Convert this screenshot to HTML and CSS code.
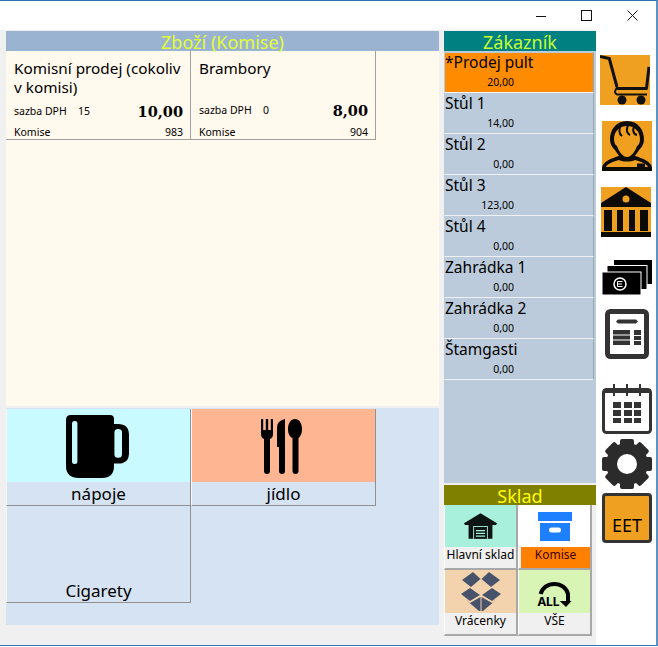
FILE: index.html
```html
<!DOCTYPE html>
<html lang="cs">
<head>
<meta charset="utf-8">
<title>Pokladna</title>
<link rel="stylesheet" href="styles.css">
</head>
<body>
<div class="window">
  <header class="titlebar">
    <svg class="ctl" width="10" height="10" viewBox="0 0 10 10"><path d="M0 5.500H10" stroke="#111" fill="none"/></svg>
    <svg class="ctl" width="11" height="11" viewBox="0 0 11 11"><rect x=".5" y=".5" width="10" height="10" stroke="#111" fill="none"/></svg>
    <svg class="ctl" width="11" height="11" viewBox="0 0 11 11"><path d="M.5 .5L10.500 10.500M10.500 .5L.5 10.500" stroke="#111" fill="none"/></svg>
  </header>
  <div class="main">
    <section class="goods">
      <h2 class="head head-goods">Zboží (Komise)</h2>
      <div class="items">
        <article class="card">
          <div class="card-title">Komisní prodej (cokoliv v komisi)</div>
          <div class="card-mid"><span class="rate">sazba DPH</span><span class="rate-val">15</span><b class="price">10,00</b></div>
          <div class="card-foot"><span>Komise</span><span>983</span></div>
        </article>
        <article class="card">
          <div class="card-title">Brambory</div>
          <div class="card-mid"><span class="rate">sazba DPH</span><span class="rate-val">0</span><b class="price">8,00</b></div>
          <div class="card-foot"><span>Komise</span><span>904</span></div>
        </article>
      </div>
      <div class="cats">
        <div class="cat">
          <div class="cat-img cat-cyan">
            <svg class="mug" width="63" height="63" viewBox="0 0 63 63"><path d="M5 0H44Q48 0 48 4V9H52Q63 9 63 20V38Q63 48.600 52 48.600H48V51Q48 63 36 63H13Q0 63 0 51V5Q0 0 5 0Z"/><rect x="6" y="6" width="5.400" height="43" rx="2.500" fill="#c8faff"/><rect x="48.400" y="14" width="7.600" height="28.700" rx="3.500" fill="#c8faff"/></svg>
          </div>
          <div class="cat-label">nápoje</div>
        </div>
        <div class="cat">
          <div class="cat-img cat-salmon">
            <svg class="cutlery" width="41" height="55" viewBox="0 0 41 55"><path d="M0 0H2.200V11H4.800V0H7.200V11H9.800V0H12V15Q12 19 9 20V52Q9 55 6 55T3 52V20Q0 19 0 15Z"/><path d="M24 0V52Q24 55 21 55T18 52V28H16V8Q16 2 24 0Z"/><path d="M34 0C38 0 41 4 41 10C41 15 39 18 37.500 19V52Q37.500 55 34.500 55T31.500 52V19C29 18 27 15 27 10C27 4 30 0 34 0Z"/></svg>
          </div>
          <div class="cat-label">jídlo</div>
        </div>
        <div class="cat">
          <div class="cat-img"></div>
          <div class="cat-label">Cigarety</div>
        </div>
      </div>
    </section>

    <section class="customers">
      <h2 class="head head-cust">Zákazník</h2>
      <div class="cust-list">
        <div class="row row-on"><div class="row-name">*Prodej pult</div><div class="row-sum">20,00</div></div>
        <div class="row"><div class="row-name">Stůl 1</div><div class="row-sum">14,00</div></div>
        <div class="row"><div class="row-name">Stůl 2</div><div class="row-sum">0,00</div></div>
        <div class="row"><div class="row-name">Stůl 3</div><div class="row-sum">123,00</div></div>
        <div class="row"><div class="row-name">Stůl 4</div><div class="row-sum">0,00</div></div>
        <div class="row"><div class="row-name">Zahrádka 1</div><div class="row-sum">0,00</div></div>
        <div class="row"><div class="row-name">Zahrádka 2</div><div class="row-sum">0,00</div></div>
        <div class="row"><div class="row-name">Štamgasti</div><div class="row-sum">0,00</div></div>
      </div>
      <h2 class="head head-store">Sklad</h2>
      <div class="stores">
        <div class="store">
          <div class="store-img img-mint">
            <svg width="33" height="26" viewBox="0 0 36 28"><path d="M18 0L36 11L35 13H31V28H5V13H1L0 11Z" fill="#0c1512"/><rect x="10" y="14" width="16" height="14" fill="#a8f0dc"/><rect x="11" y="15" width="14" height="13" fill="#0c1512"/><path d="M13 19H23M13 22H23M13 25H23" stroke="#a8f0dc" stroke-width="1.200"/></svg>
          </div>
          <div class="store-label">Hlavní sklad</div>
        </div>
        <div class="store">
          <div class="store-img img-white">
            <svg width="34" height="29" viewBox="0 0 34 29"><rect width="34" height="9" fill="#1e80ff"/><rect x="2" y="11" width="30" height="18" fill="#1e80ff"/><rect x="11" y="15.500" width="12" height="5" rx="2.500" fill="#fff"/></svg>
          </div>
          <div class="store-label label-on">Komise</div>
        </div>
        <div class="store">
          <div class="store-img img-peach">
            <svg width="40" height="39" viewBox="0 0 40 39" fill="#46536a"><path d="M12 0L19.500 7L10 15L1 8Z"/><path d="M28 0L39 8L30 15L20.500 7Z"/><path d="M9 16L19 23L9 29L0 22Z"/><path d="M31 16L40 22L31 29L21 23Z"/><path d="M4 27L9 31L19.500 25V39H18Z"/><path d="M36 27L31 31L20.500 25V39H22Z"/></svg>
          </div>
          <div class="store-label">Vrácenky</div>
        </div>
        <div class="store">
          <div class="store-img img-lime">
            <div class="all-icon">
              <svg class="all-arc" width="34" height="27" viewBox="0 0 34 27"><path d="M2.700 13A14 13 0 0 1 30 13V21" fill="none" stroke="#000" stroke-width="4"/><path d="M21.700 20H33.500L28 26Z"/></svg>
              <span class="all-text">ALL</span>
            </div>
          </div>
          <div class="store-label">VŠE</div>
        </div>
      </div>
    </section>

    <aside class="rail">
      <svg class="ic ic-cart" width="50" height="50" viewBox="0 0 50 50"><rect width="50" height="50" fill="#f0a020"/><path d="M0 1.500L9.300 3.500L17 32" fill="none" stroke="#111" stroke-width="3"/><path d="M16 33.500H47.500M49 12L46.500 33.500" fill="none" stroke="#111" stroke-width="3"/><path d="M17 33Q13 37 17 39.500H47" fill="none" stroke="#111" stroke-width="2"/><circle cx="22" cy="45" r="4.500" fill="#111"/><circle cx="41" cy="45" r="4.500" fill="#111"/></svg>
      <svg class="ic ic-person" width="50" height="50" viewBox="0 0 50 50"><rect width="50" height="50" fill="#f0a020"/><path d="M25 0C14 0 8 9 8 18C8 24 11 27 13 29C14 31 16 33 17 35C10 37 0 41 0 47V50H50V47C50 41 40 37 33 35C34 33 36 31 37 29C39 27 42 24 42 18C42 9 36 0 25 0Z" fill="#0d0b06"/><path d="M25 5C17 5 12 11 12 18C12 21 13 24 15 25C17 31 21 36 25 36C29 36 33 31 35 25C37 24 38 21 38 18C38 11 33 5 25 5Z" fill="#f0a020"/><path d="M17 39C21 41 29 41 33 39C40 41 45 43 46 46H4C5 43 10 41 17 39Z" fill="#f0a020"/><path d="M35 42.500H43V46H35Z" fill="#0d0b06"/><path d="M20 3C16 8 17 13 20 15M27 3C24 7 24 12 28 14M33 5C30 8 31 13 35 14" stroke="#0d0b06" stroke-width="2" fill="none"/></svg>
      <svg class="ic ic-bank" width="50" height="50" viewBox="0 0 50 50"><rect width="50" height="50" fill="#f0a020"/><path d="M25 0L50 16V20H0V16Z" fill="#0d0b06"/><circle cx="25" cy="12" r="3.500" fill="#f0a020"/><path d="M3 23H11V44H3ZM16 23H22V44H16ZM28 23H34V44H28ZM39 23H47V44H39Z" fill="#0d0b06"/><rect y="45" width="50" height="5" fill="#0d0b06"/></svg>
      <svg class="ic ic-money" width="50" height="35" viewBox="0 0 50 35"><rect x="12" y="0" width="38" height="24" fill="#000"/><rect x="5" y="5.500" width="40" height="24" fill="#000" stroke="#fff"/><rect x="0" y="12" width="39" height="23" fill="#000" stroke="#fff"/><circle cx="18" cy="24" r="6" fill="none" stroke="#fff" stroke-width="1.500"/><path d="M20.500 21.500H15.500V26.500H20.500M15.500 24H20" fill="none" stroke="#fff"/></svg>
      <svg class="ic ic-invoice" width="44" height="50" viewBox="0 0 44 50"><rect x="2.500" y="2.500" width="39" height="45" rx="3" fill="#fff" stroke="#333" stroke-width="5"/><path d="M13 10.500H31L33 12.500 31 14.500H13L11 12.500Z" fill="#333"/><rect x="8" y="21" width="17" height="15" fill="#333"/><path d="M8 26H25M8 31H25" stroke="#fff"/><rect x="29" y="21" width="7" height="5" fill="#333"/><rect x="29" y="27" width="7" height="4" fill="#333"/><rect x="29" y="32" width="7" height="4" fill="#333"/></svg>
      <svg class="ic ic-cal" width="50" height="50" viewBox="0 0 50 50"><rect x="1.500" y="5.500" width="47" height="43" rx="3" fill="#fff" stroke="#333" stroke-width="3"/><path d="M12 0V12M25 0V12M38 0V12" stroke="#333" stroke-width="2"/><path d="M1 7H49" stroke="#333" stroke-width="4"/><g fill="#333"><rect x="11" y="18" width="8" height="6"/><rect x="22" y="18" width="8" height="6"/><rect x="32" y="18" width="7" height="6"/><rect x="11" y="26" width="8" height="6"/><rect x="22" y="26" width="8" height="6"/><rect x="32" y="26" width="7" height="6"/><rect x="11" y="34" width="8" height="5"/><rect x="22" y="34" width="8" height="5"/><rect x="32" y="34" width="7" height="5"/></g></svg>
      <svg class="ic ic-gear" width="50" height="50" viewBox="0 0 50 50"><g fill="#2b2b2b"><circle cx="25" cy="25" r="21"/><rect x="18" y="0" width="14" height="50" rx="2"/><rect x="18" y="0" width="14" height="50" rx="2" transform="rotate(45 25 25)"/><rect x="18" y="0" width="14" height="50" rx="2" transform="rotate(90 25 25)"/><rect x="18" y="0" width="14" height="50" rx="2" transform="rotate(135 25 25)"/></g><circle cx="25" cy="25" r="10" fill="#fff"/></svg>
      <div class="eet">EET</div>
    </aside>
  </div>
</div>
</body>
</html>
```

FILE: styles.css
```css
* { box-sizing: border-box; }
html, body { margin: 0; padding: 0; background: #fff; }
body { font-family: "Noto Sans", sans-serif; color: #000; }
.window {
  width: 658px;
  height: 646px;
  border-top: 1px solid #2f76b0;
  border-right: 2px solid #5b93c4;
  border-bottom: 1px solid #2f76b0;
  display: flex;
  flex-direction: column;
  background: #fff;
}
.titlebar {
  height: 29px;
  flex: none;
  display: flex;
  justify-content: flex-end;
  align-items: center;
  gap: 35px;
  padding: 0 18px 0 0;
}
.main { flex: 1; display: flex; min-height: 0; background: #f0f0f0; }
.goods { width: 439px; padding: 1px 0 0 6px; flex: none; }
.head {
  margin: 0;
  height: 20px;
  font-size: 18px;
  font-weight: 400;
  line-height: 22px;
  text-align: center;
  white-space: nowrap;
  overflow: visible;
}
.head-goods { background: #9ab3d1; color: #e2ff36; }
.head-cust { background: #008080; color: #c8ff33; }
.head-store { background: #808000; color: #ffff00; margin-top: 2px; }
.items {
  height: 355px;
  background: #fff9ee;
  display: grid;
  grid-template-columns: 185px 185px;
  grid-auto-rows: 89px;
}
.card {
  border-right: 1px solid #a0a0a0;
  border-bottom: 1px solid #a0a0a0;
  padding: 8px 7px 0 8px;
  display: flex;
  flex-direction: column;
}
.card-title { height: 38px; font-size: 15.300px; line-height: 19px; }
.card-mid { display: flex; align-items: center; height: 24px; margin-top: 3px; font-size: 10.500px; }
.rate { width: 64px; }
.price { margin-left: auto; font-family: "DejaVu Serif", serif; font-size: 14.500px; font-weight: 700; }
.card-foot { display: flex; justify-content: space-between; font-size: 10.500px; margin-top: 3px; line-height: 14px; }
.cats {
  margin-top: 2px;
  padding-top: 1px;
  height: 217px;
  background: #d6e3f2;
  display: grid;
  grid-template-columns: 185px 185px;
  grid-auto-rows: 97px;
}
.cat {
  border-right: 1px solid #909090;
  border-bottom: 1px solid #909090;
  border-left: 1px solid #f5f9fd;
  display: flex;
  flex-direction: column;
}
.cat-img {
  height: 73px;
  flex: none;
  display: flex;
  align-items: center;
  justify-content: center;
}
.cat-img svg { display: block; }
.mug { margin: 1px 3px 0 0; }
.cutlery { margin: 2px 4px 0 0; }
.cat-cyan { background: #c8faff; }
.cat-salmon { background: #fdb691; }
.cat-label { flex: 1; font-size: 17px; line-height: 24px; text-align: center; }
.customers { width: 152px; margin-left: 5px; padding-top: 1px; flex: none; display: flex; flex-direction: column; }
.cust-list { height: 432px; background: #bccbdb; padding-top: 1px; }
.row {
  height: 41px;
  width: 150px;
  border-top: 1px solid transparent;
  border-bottom: 1px solid #eef2f6;
  border-right: 1px solid #98a6b4;
  border-left: 1px solid #bccbdb;
}
.row-on { background: #ff8c00; background-clip: padding-box; }
.row-name { font-size: 15.500px; line-height: 18px; height: 22px; white-space: nowrap; }
.row-sum { font-size: 10.500px; line-height: 14px; width: 69px; text-align: right; }
.stores {
  display: grid;
  grid-template-columns: 74px 74px;
  grid-template-rows: 65px 66px;
  background: #f0f0f0;
}
.store {
  display: flex;
  flex-direction: column;
  border-right: 2px solid #a8a8a8;
  border-bottom: 2px solid #a8a8a8;
  border-left: 1px solid #fff;
  background: #f0f0f0;
}
.store-img {
  flex: 1;
  display: flex;
  align-items: center;
  justify-content: center;
}
.img-mint { background: #a8f0dc; }
.img-white { background: #fff; }
.img-peach { background: #f3d3ad; }
.img-lime { background: #d9f5b5; padding-top: 5px; }
.store-label { height: 21px; flex: none; font-size: 12px; line-height: 16px; text-align: center; white-space: nowrap; }
.label-on { background: #ff8000; margin-left: 2px; color: #400; }
.all-icon { position: relative; width: 34px; height: 27px; }
.all-arc { display: block; }
.all-text { position: absolute; left: 0; bottom: 0; font-size: 12.500px; font-weight: 700; line-height: 13px; letter-spacing: -.3px; }
.rail { flex: 1; background: #fff; display: flex; flex-direction: column; padding: 25px 0 0 4px; }
.ic { display: block; flex: none; }
.ic-person { margin: 16px 0 0 2px; }
.ic-bank { margin: 16px 0 0 1px; }
.ic-money { margin: 23px 0 0 2px; }
.ic-invoice { margin: 14px 0 0 5px; }
.ic-cal { margin: 25px 0 0 2px; }
.ic-gear { margin: 5px 0 0 2px; }
.eet {
  margin: 4px 0 0 2px;
  width: 50px;
  height: 50px;
  background: #f0a020;
  border: 3px solid #333;
  border-radius: 4px;
  font-size: 18px;
  line-height: 20px;
  padding-top: 19px;
  text-align: center;
}
```
